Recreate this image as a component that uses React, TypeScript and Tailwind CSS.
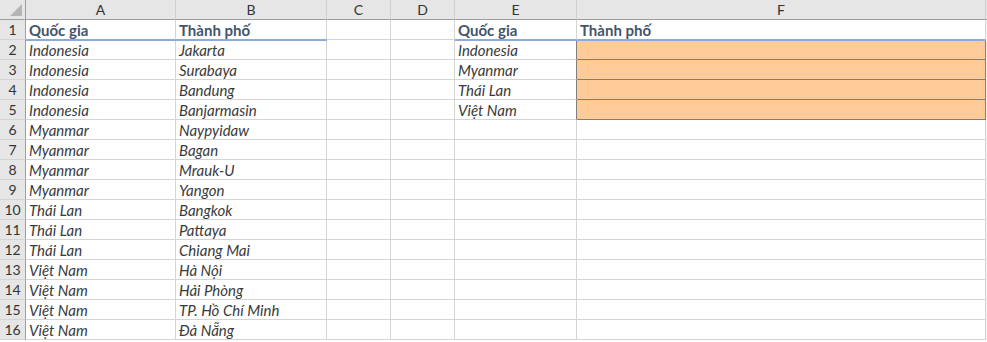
import React from "react";

const cols = ["A", "B", "C", "D", "E", "F"];
const widths = ["w-[150px]", "w-[151px]", "w-[64px]", "w-[64px]", "w-[122px]", "w-[409px]"];

const data: [string, string][] = [
  ["Indonesia", "Jakarta"],
  ["Indonesia", "Surabaya"],
  ["Indonesia", "Bandung"],
  ["Indonesia", "Banjarmasin"],
  ["Myanmar", "Naypyidaw"],
  ["Myanmar", "Bagan"],
  ["Myanmar", "Mrauk-U"],
  ["Myanmar", "Yangon"],
  ["Thái Lan", "Bangkok"],
  ["Thái Lan", "Pattaya"],
  ["Thái Lan", "Chiang Mai"],
  ["Việt Nam", "Hà Nội"],
  ["Việt Nam", "Hải Phòng"],
  ["Việt Nam", "TP. Hồ Chí Minh"],
  ["Việt Nam", "Đà Nẵng"],
];

const lookup = ["Indonesia", "Myanmar", "Thái Lan", "Việt Nam"];

type CellProps = {
  w: string;
  text?: string;
  head?: boolean;
  underline?: boolean;
  fill?: boolean;
  darkRight?: boolean;
};

const Cell = ({ w, text, head, underline, fill, darkRight }: CellProps) => {
  let cls = `${w} h-5 shrink-0 flex items-end px-[3px] pb-px overflow-hidden whitespace-nowrap border-r border-b `;
  if (underline) cls += "border-b-[#8eaadb] shadow-[0_1px_0_#8eaadb] relative z-10 ";
  else if (fill) cls += "border-b-[#7f7f7f] ";
  else cls += "border-b-[#d4d4d4] ";
  cls += fill || darkRight ? "border-r-[#7f7f7f] " : "border-r-[#d4d4d4] ";
  if (fill) cls += "bg-[#ffcc99] ";
  cls += head ? "font-bold text-[#44546a]" : "italic text-[#3a3a3a]";
  return <div className={cls}>{text}</div>;
};

export default function App() {
  return (
    <div className="w-[987px] h-[342px] overflow-hidden bg-white font-['Lato',sans-serif] text-[15px] leading-none">
      {/* column headers */}
      <div className="flex h-5">
        <div className="w-[26px] h-5 shrink-0 bg-[#e6e6e6] border-r border-b border-[#9e9e9e] flex items-end justify-end p-[3px]">
          <svg width="12" height="12" viewBox="0 0 12 12">
            <polygon points="12,0 12,12 0,12" fill="#b5b5b5" />
          </svg>
        </div>
        {cols.map((c, i) => (
          <div
            key={c}
            className={`${widths[i]} h-5 shrink-0 bg-[#e6e6e6] border-b border-b-[#9e9e9e] border-r border-r-[#d0d0d0] flex items-center justify-center text-[14px] text-[#333]`}
          >
            {c}
          </div>
        ))}
        <div className="flex-1 h-5 bg-[#e6e6e6] border-b border-b-[#9e9e9e]" />
      </div>

      {/* rows */}
      {Array.from({ length: 16 }, (_, r) => {
        const row = r + 1;
        const d = row >= 2 ? data[row - 2] : undefined;
        const lk = row >= 2 && row <= 5 ? lookup[row - 2] : undefined;
        return (
          <div key={row} className="flex h-5">
            <div className="w-[26px] h-5 shrink-0 bg-[#e6e6e6] border-r border-r-[#9e9e9e] border-b border-b-[#d4d4d4] flex items-center justify-center text-[14px] text-[#333]">
              {row}
            </div>
            {row === 1 ? (
              <>
                <Cell w={widths[0]} text="Quốc gia" head underline />
                <Cell w={widths[1]} text="Thành phố" head underline />
                <Cell w={widths[2]} />
                <Cell w={widths[3]} />
                <Cell w={widths[4]} text="Quốc gia" head underline />
                <Cell w={widths[5]} text="Thành phố" head underline />
              </>
            ) : (
              <>
                <Cell w={widths[0]} text={d?.[0]} />
                <Cell w={widths[1]} text={d?.[1]} />
                <Cell w={widths[2]} />
                <Cell w={widths[3]} />
                <Cell w={widths[4]} text={lk} darkRight={!!lk} />
                <Cell w={widths[5]} fill={!!lk} />
              </>
            )}
            <div className="flex-1 h-5 bg-[#f3f3f3]" />
          </div>
        );
      })}
    </div>
  );
}
